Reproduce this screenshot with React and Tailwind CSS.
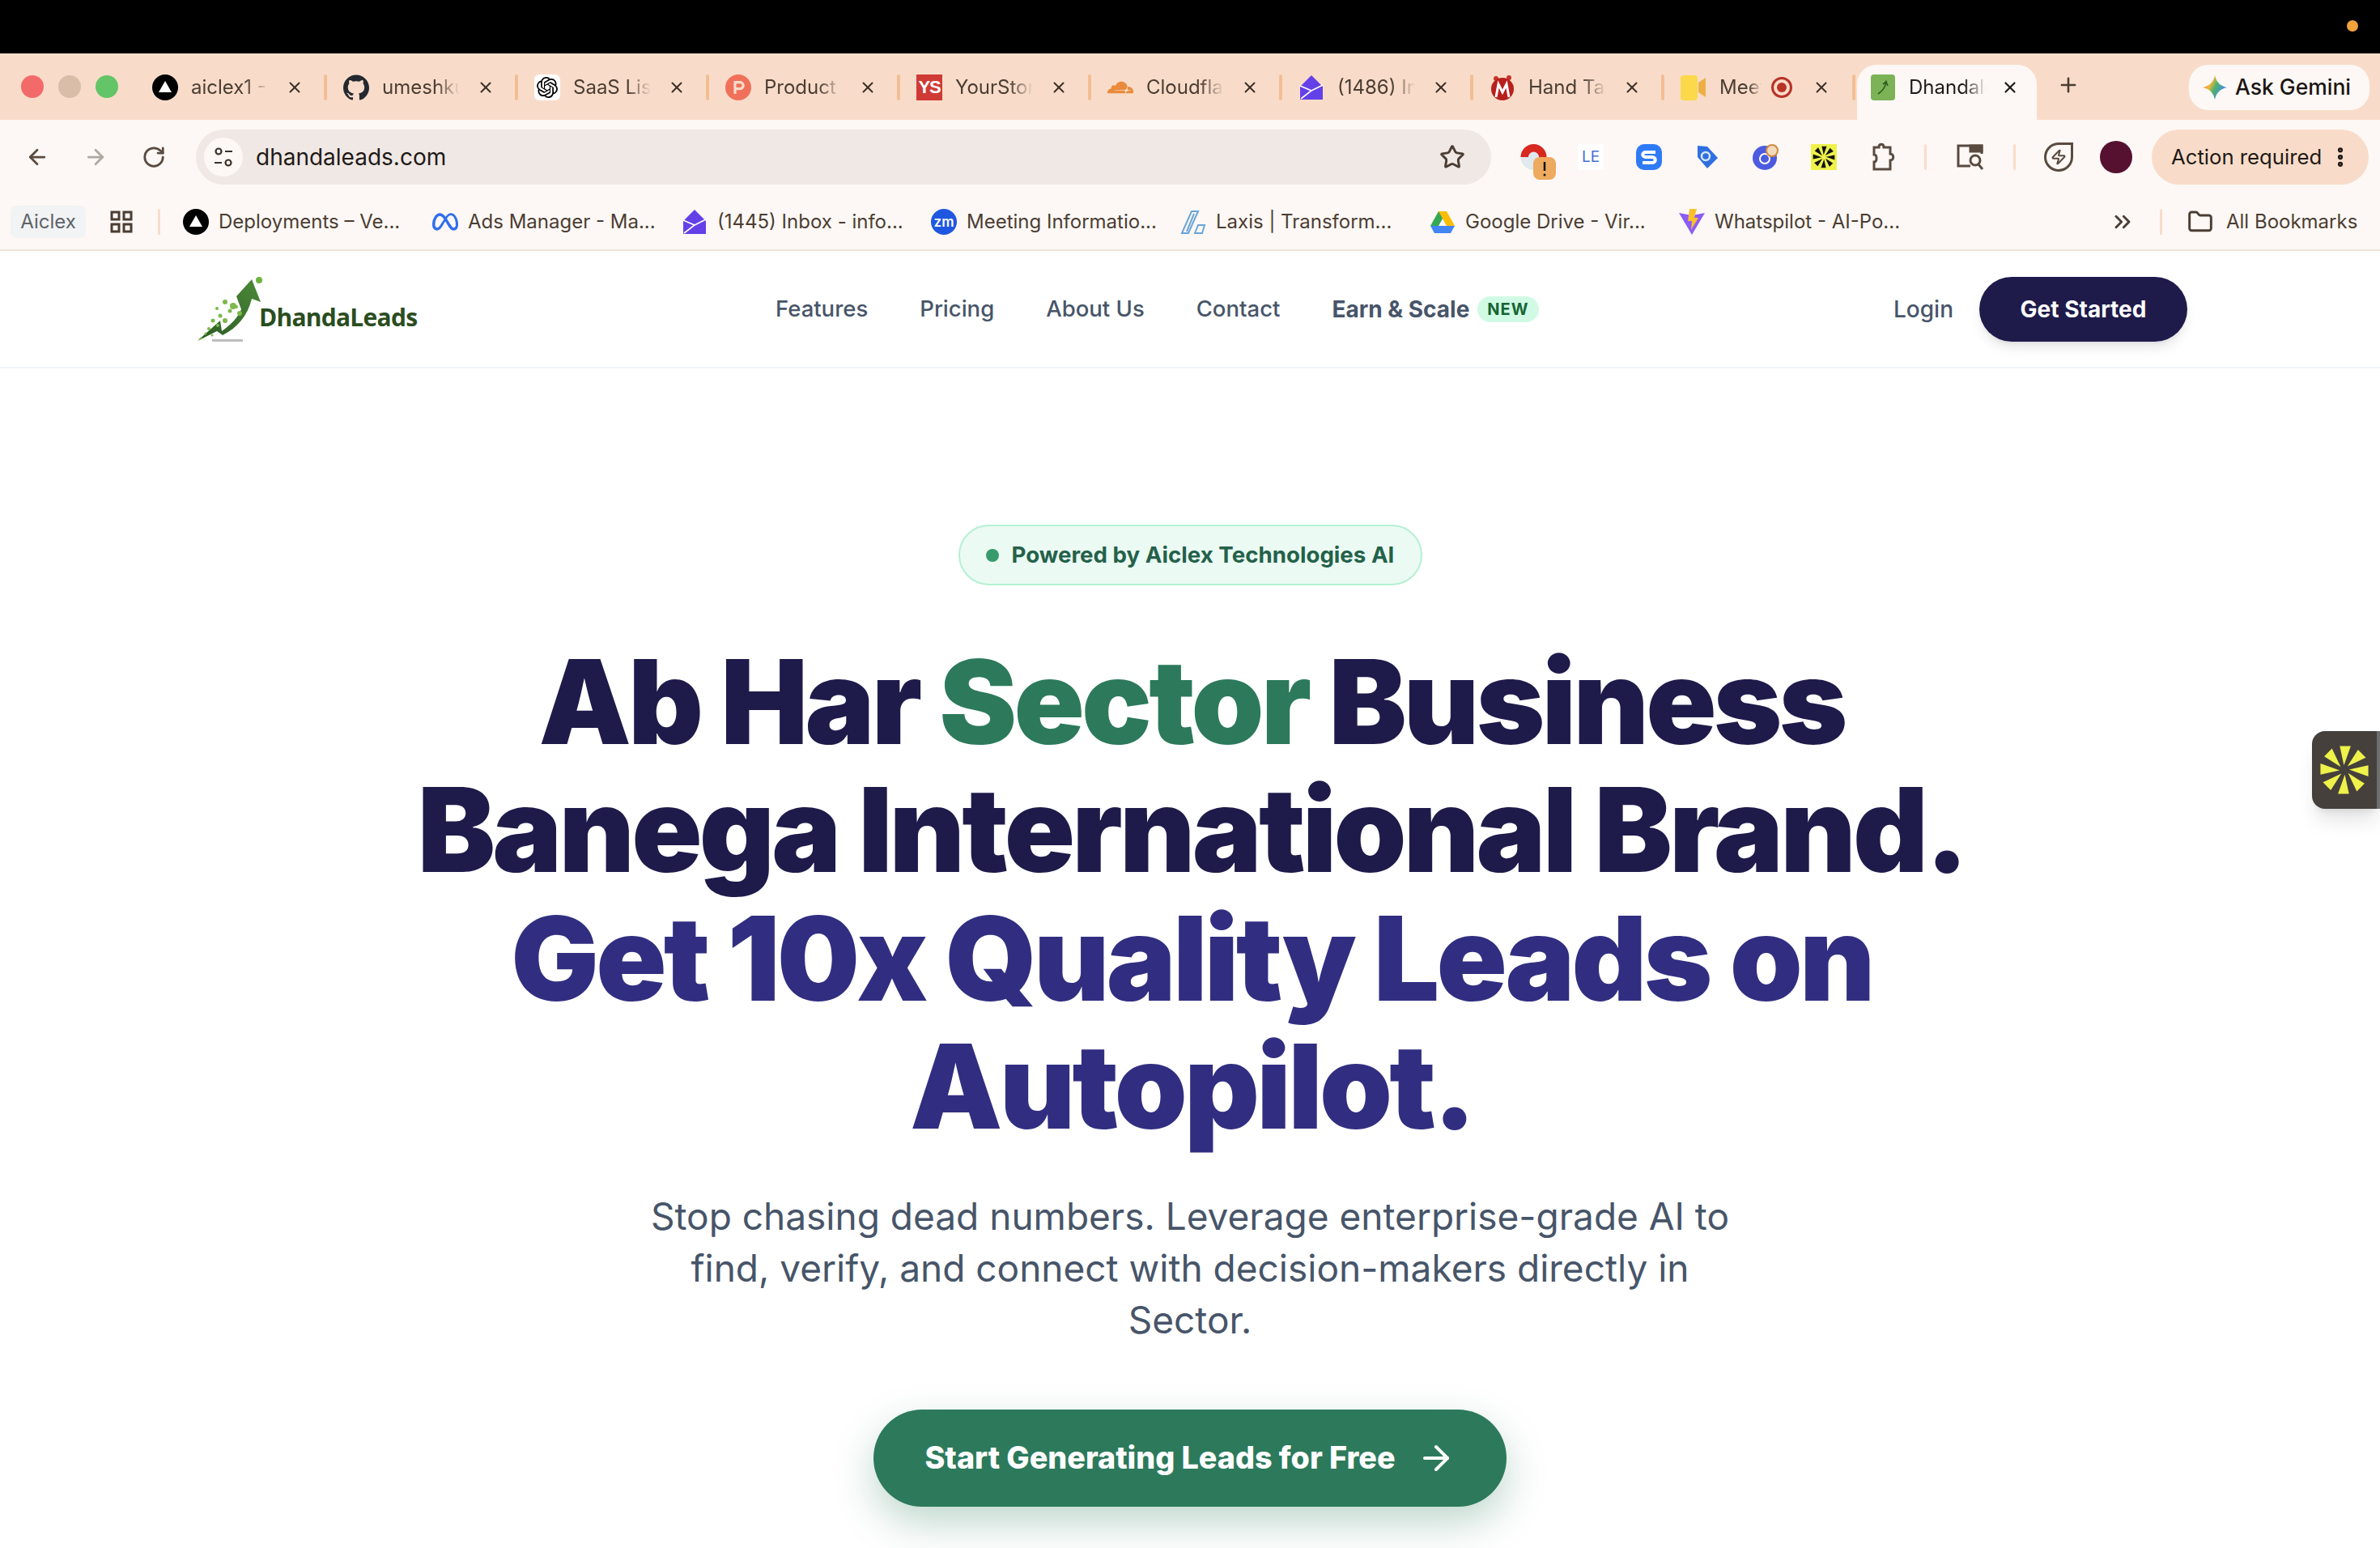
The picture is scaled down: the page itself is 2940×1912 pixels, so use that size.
import React from 'react';
import { ArrowLeft, ArrowRight, RotateCw, Star, X, Plus, EllipsisVertical, Folder, ChevronsRight, Zap } from 'lucide-react';
import { SiGithub, SiOpenai, SiProducthunt, SiCloudflare, SiMeta } from 'react-icons/si';

const VercelIcon = () => (
    <svg viewBox="0 0 32 32" className="w-8 h-8 shrink-0">
        <circle cx="16" cy="16" r="16" fill="#000" />
        <path d="M16 8 L24 22 H8 Z" fill="#fff" />
    </svg>
);

const InboxIcon = () => (
    <svg viewBox="0 0 32 32" className="w-8 h-8 shrink-0">
        <path d="M16 1 L30 15 L30 31 L2 31 L2 15 Z" fill="#6440e8" />
        <path d="M3 30 L16 20 L2 14 M16 20 L30 13" stroke="#fff" strokeWidth="1.6" fill="none" />
    </svg>
);

const Spark = ({ fill = '#eef24a', stroke, className }) => (
    <svg viewBox="-32 -32 64 64" className={className}>
        {[0, 45, 90, 135, 180, 225, 270, 315].map((a) => (
            <path key={a} d="M-1 -6 L-8 -30 L6 -31 Z" fill={fill} stroke={stroke} transform={`rotate(${a + 4})`} />
        ))}
    </svg>
);

const tabs = [
    { label: 'aiclex1 - Overview', icon: <VercelIcon /> },
    { label: 'umeshkumar', icon: <SiGithub className="w-8 h-8 shrink-0 text-[#24292f]" /> },
    { label: 'SaaS List', icon: <span className="w-8 h-8 shrink-0 rounded-md bg-white flex items-center justify-center"><SiOpenai className="w-[26px] h-[26px] text-black" /></span> },
    { label: 'Product', icon: <SiProducthunt className="w-8 h-8 shrink-0 text-[#f0705a]" /> },
    { label: 'YourStory', icon: <span className="w-8 h-8 shrink-0 bg-[#cf3a35] text-white text-[22px] leading-8 font-bold text-center tracking-tighter font-['Liberation_Sans',sans-serif]">YS</span> },
    { label: 'Cloudflare', icon: <SiCloudflare className="w-8 h-8 shrink-0 text-[#e98a3c]" /> },
    { label: '(1486) Inbox', icon: <InboxIcon /> },
    {
        label: 'Hand Talk',
        icon: (
            <svg viewBox="0 0 32 32" className="w-8 h-8 shrink-0">
                <circle cx="8" cy="5" r="3" fill="#c8322a" />
                <circle cx="24" cy="4" r="3" fill="#c8322a" />
                <circle cx="16" cy="18" r="14" fill="#b8201c" />
                <path d="M8 28 L11 12 L16 22 L21 12 L24 28" stroke="#fff" strokeWidth="3" fill="none" />
            </svg>
        ),
    },
    {
        label: 'Meet',
        icon: (
            <svg viewBox="0 0 32 32" className="w-8 h-8 shrink-0">
                <rect x="0" y="1" width="21" height="31" rx="4" fill="#fbd94a" />
                <path d="M22 10 L31 4 V28 L22 22 Z" fill="#efae45" />
            </svg>
        ),
        record: true,
    },
];

const bookmarks = [
    { label: 'Deployments – Ve...', icon: <VercelIcon /> },
    { label: 'Ads Manager - Ma...', icon: <SiMeta className="w-8 h-8 shrink-0 text-[#2f6fed]" /> },
    { label: '(1445) Inbox - info...', icon: <InboxIcon /> },
    { label: 'Meeting Informatio...', icon: <span className="w-8 h-8 shrink-0 rounded-full bg-[#1f57e0] text-white text-[17px] leading-8 text-center font-semibold">zm</span> },
    {
        label: 'Laxis | Transform...',
        icon: (
            <svg viewBox="0 0 32 32" className="w-8 h-8 shrink-0" fill="none" stroke="#6aa5d8" strokeWidth="2">
                <path d="M2 30 L14 3 H22 L10 30 Z" />
                <path d="M8 28 L17 6" />
                <path d="M18 30 L22 20 H30 L27 30 Z" />
            </svg>
        ),
    },
    {
        label: 'Google Drive - Vir...',
        icon: (
            <svg viewBox="0 0 32 32" className="w-8 h-8 shrink-0">
                <path d="M11 3 H21 L11 21 H1 Z" fill="#34a853" />
                <path d="M11 3 H21 L31 21 H21 Z" fill="#fbbc04" />
                <path d="M1 21 H31 L26 30 H6 Z" fill="#4285f4" />
            </svg>
        ),
    },
    {
        label: 'Whatspilot - AI-Po...',
        icon: (
            <svg viewBox="0 0 32 32" className="w-8 h-8 shrink-0">
                <path d="M0 5 L16 8 L32 5 L16 32 Z" fill="#8b5cf6" />
                <path d="M13 0 H22 L19 11 H24 L15 26 L16 15 H11 Z" fill="#fbc02d" />
            </svg>
        ),
    },
];

const extensions = [
    <svg key="poke" viewBox="0 0 48 48" className="w-12 h-12">
        <circle cx="16.5" cy="16" r="16" fill="#dfe9ee" />
        <path d="M0.5 16 A16 16 0 0 1 32.5 16 L23 16 A6.5 6.5 0 0 0 10 16 Z" fill="#d8281f" />
        <rect x="16" y="16" width="28" height="28" rx="8" fill="#eeaa5e" />
        <path d="M30 22 V33" stroke="#111" strokeWidth="2.5" />
        <circle cx="30" cy="38" r="1.5" fill="#111" />
    </svg>,
    <span key="le" className="w-8 h-8 bg-white text-[#4a6fd0] text-[19px] leading-8 text-center">LE</span>,
    <svg key="s" viewBox="0 0 32 32" className="w-8 h-8">
        <rect width="32" height="32" rx="10" fill="#2f7bf6" />
        <path d="M24 10 H12 C7 10 7 16 12 16 H20 C25 16 25 23 20 23 H8" stroke="#fff" strokeWidth="4" fill="none" />
    </svg>,
    <svg key="tag" viewBox="0 0 32 32" className="w-8 h-8">
        <path d="M4 2 L16 3 L29 17 L16 30 L4 16 Z" fill="#2f6fe0" />
        <circle cx="14" cy="15" r="5" fill="none" stroke="#d6e4fb" strokeWidth="2.5" />
    </svg>,
    <svg key="ring" viewBox="0 0 32 32" className="w-8 h-8">
        <circle cx="15" cy="17" r="15" fill="#4c5be0" />
        <circle cx="15" cy="18" r="6" fill="none" stroke="#fff" strokeWidth="2" />
        <circle cx="24" cy="8" r="7" fill="#f3d9bd" stroke="#d08a3c" strokeWidth="2" />
    </svg>,
    <span key="spark" className="w-8 h-8 bg-[#eef24a] flex items-center justify-center"><Spark fill="#111" className="w-7 h-7" /></span>,
];

const Tab = ({ tab }) => (
    <div className="relative w-[236px] h-8 pl-6 flex items-center shrink-0">
        {tab.icon}
        <span className={`ml-4 ${tab.record ? 'w-[52px]' : 'w-[96px]'} overflow-hidden whitespace-nowrap text-[24px] text-[#4b3d33] [mask-image:linear-gradient(to_right,black_70%,transparent)]`}>
            {tab.label}
        </span>
        {tab.record && (
            <span className="ml-3 w-[26px] h-[26px] rounded-full border-[3px] border-[#b83226] flex items-center justify-center shrink-0">
                <span className="w-3 h-3 rounded-full bg-[#b83226]" />
            </span>
        )}
        <X className={`${tab.record ? 'ml-[25px]' : 'ml-[21px]'} w-[22px] h-[22px] text-[#3d302a] shrink-0`} strokeWidth={2.2} />
        <span className="absolute right-[-4px] top-0 w-1 h-8 rounded-sm bg-[#f3bd94]" />
    </div>
);

const ToolbarDivider = ({ className }) => <span className={`block shrink-0 w-[3px] h-8 bg-[#f8dcc9] rounded-sm ${className}`} />;

export default function App() {
    return (
        <div className="relative h-[1912px] w-[2940px] overflow-hidden bg-white font-['Inter',sans-serif]">
            <div className="relative h-[66px] bg-black">
                <span className="absolute left-[2899px] top-[25px] w-[14px] h-[14px] rounded-full bg-[#f2a23c]" />
            </div>

            {/* Tab strip */}
            <div className="relative h-[82px] bg-[#f8dcc9] flex items-start">
                <div className="flex gap-[18px] pl-[26px] pt-[27px]">
                    <span className="w-7 h-7 rounded-full bg-[#f26a6a]" />
                    <span className="w-7 h-7 rounded-full bg-[#d9bda9]" />
                    <span className="w-7 h-7 rounded-full bg-[#63c567]" />
                </div>
                <div className="flex pl-[18px] pt-[26px]">
                    {tabs.map((tab) => (
                        <Tab key={tab.label} tab={tab} />
                    ))}
                </div>
                <div className="absolute bottom-0 left-[2294px] h-[68px] w-[222px] rounded-t-[24px] bg-[#fdf8f5] flex items-center pl-[17px] pb-3">
                    <span className="w-[30px] h-[32px] rounded-sm bg-[#7cb356] flex items-center justify-center shrink-0">
                        <svg viewBox="0 0 20 20" className="w-5 h-5"><path d="M4 18 C10 14 13 10 14 3 L16 8 M14 3 L10 6" stroke="#2c5a20" strokeWidth="1.6" fill="none" /></svg>
                    </span>
                    <span className="ml-[17px] w-[96px] overflow-hidden whitespace-nowrap text-[24px] text-[#1f1a17] [mask-image:linear-gradient(to_right,black_70%,transparent)]">Dhandaleads</span>
                    <X className="ml-[18px] w-[22px] h-[22px] text-[#1f1a17] shrink-0" strokeWidth={2.4} />
                </div>
                <Plus className="absolute left-[2541px] top-[25px] w-7 h-7 text-[#4b3d33]" strokeWidth={2.2} />
                <div className="absolute left-[2704px] top-[14px] h-[56px] w-[223px] rounded-[24px] bg-[#fdf8f5] flex items-center pl-[17px]">
                    <svg viewBox="0 0 32 32" className="w-[30px] h-[30px] shrink-0">
                        <defs>
                            <linearGradient id="gem" x1="0" y1="0" x2="1" y2="0.5">
                                <stop offset="0" stopColor="#e8604c" />
                                <stop offset="0.4" stopColor="#f2b53c" />
                                <stop offset="0.6" stopColor="#4fb26a" />
                                <stop offset="1" stopColor="#4285f4" />
                            </linearGradient>
                        </defs>
                        <path d="M16 0 C18 9 23 14 32 16 C23 18 18 23 16 32 C14 23 9 18 0 16 C9 14 14 9 16 0 Z" fill="url(#gem)" />
                    </svg>
                    <span className="ml-[10px] text-[26.5px] font-medium text-[#1a1512] whitespace-nowrap">Ask Gemini</span>
                </div>
            </div>

            {/* Address toolbar */}
            <div className="h-[92px] bg-[#fdf8f5] flex items-center">
                <div className="flex items-center w-[242px] pl-[31px] gap-[42px]">
                    <ArrowLeft className="w-[30px] h-[30px] text-[#5a4a40]" strokeWidth={2.2} />
                    <ArrowRight className="w-[30px] h-[30px] text-[#b0a8a2]" strokeWidth={2.2} />
                    <RotateCw className="w-[30px] h-[30px] text-[#5a4a40]" strokeWidth={2.2} />
                </div>
                <div className="w-[1600px] h-[68px] rounded-full bg-[#f0e8e5] flex items-center pl-[10px] pr-[32px]">
                    <span className="w-12 h-12 rounded-full bg-[#fdf8f5] flex items-center justify-center">
                        <svg viewBox="0 0 28 28" className="w-7 h-7" fill="none" stroke="#3d302a" strokeWidth="2.2">
                            <circle cx="8" cy="7" r="3.5" />
                            <path d="M16 7 H25 M3 21 H12" />
                            <circle cx="20" cy="21" r="3.5" />
                        </svg>
                    </span>
                    <span className="ml-4 text-[28px] text-[#1f1a17]">dhandaleads.com</span>
                    <Star className="ml-auto w-[32px] h-[32px] text-[#4b3d33]" strokeWidth={2.2} />
                </div>
                <div className="ml-[27px] w-12 h-12 flex items-center justify-center"><span className="ml-[18px] mt-[16px] flex">{extensions[0]}</span></div>
                <div className="ml-[32px] flex items-center gap-[40px]">{extensions.slice(1)}</div>
                <svg viewBox="0 0 32 36" className="ml-[40px] w-8 h-9" fill="none" stroke="#5a4a40" strokeWidth="3">
                    <path d="M6 6 H12 C12 1 18 1 18 6 H26 V14 C31 14 31 22 26 22 V33 H6 V24 C10 24 10 15 6 15 Z" />
                </svg>
                <ToolbarDivider className="ml-[36px]" />
                <svg viewBox="0 0 36 36" className="ml-[36px] w-9 h-9" fill="none" stroke="#5a4a40" strokeWidth="3">
                    <path d="M18 29 H3 V4 H32 V14" />
                    <path d="M18 4 H32 V11 H18 Z" fill="#5a4a40" />
                    <circle cx="24" cy="22" r="6" />
                    <path d="M28 27 L33 33" />
                </svg>
                <ToolbarDivider className="ml-[35px]" />
                <span className="ml-[35px] w-9 h-9 rounded-full rounded-tr-none border-[3px] border-[#5a4a40] flex items-center justify-center">
                    <Zap className="w-5 h-5 text-[#5a4a40]" strokeWidth={2.4} />
                </span>
                <span className="ml-[33px] w-10 h-10 rounded-full bg-[#561030]" />
                <div className="ml-[24px] w-[268px] h-[68px] rounded-full bg-[#f8dcc9] flex items-center pl-[24px]">
                    <span className="text-[25.7px] text-[#1f1a17] whitespace-nowrap">Action required</span>
                    <EllipsisVertical className="ml-[8px] w-[30px] h-[30px] text-[#1f1a17]" strokeWidth={3} />
                </div>
            </div>

            {/* Bookmarks */}
            <div className="relative h-[70px] bg-[#fdf8f5] border-b-2 border-[#f2e3da] flex items-center">
                <span className="ml-[13px] w-[93px] h-[40px] rounded-lg bg-[#f1f3f4] text-[24px] leading-[40px] text-center text-[#5f6368]">Aiclex</span>
                <svg viewBox="0 0 28 28" className="ml-[30px] w-7 h-7" fill="none" stroke="#4b3d33" strokeWidth="3">
                    <rect x="2" y="2" width="9" height="9" />
                    <rect x="17" y="2" width="9" height="9" />
                    <rect x="2" y="17" width="9" height="9" />
                    <rect x="17" y="17" width="9" height="9" />
                </svg>
                <ToolbarDivider className="ml-[31px]" />
                <div className="ml-[28px] flex">
                    {bookmarks.map((b) => (
                        <div key={b.label} className="w-[308px] flex items-center gap-3">
                            {b.icon}
                            <span className="text-[24px] text-[#4b3d33] whitespace-nowrap">{b.label}</span>
                        </div>
                    ))}
                </div>
                <ChevronsRight className="ml-[224px] w-8 h-8 text-[#4b3d33]" strokeWidth={2.2} />
                <ToolbarDivider className="ml-[30px]" />
                <Folder className="ml-[31px] w-8 h-8 text-[#4b3d33]" strokeWidth={2.2} />
                <span className="ml-4 text-[24px] text-[#4b3d33] whitespace-nowrap">All Bookmarks</span>
            </div>

            {/* Site nav */}
            <nav className="h-[145px] border-b-2 border-[#f1f5f9] bg-white">
                <div className="mx-auto w-[2464px] h-full flex items-center">
                    <div className="relative flex w-[720px] items-center">
                        <svg viewBox="0 0 90 84" className="w-[90px] h-[84px] shrink-0">
                            <defs>
                                <linearGradient id="arrowFill" x1="0" y1="1" x2="1" y2="0">
                                    <stop offset="0" stopColor="#2a5a24" />
                                    <stop offset="1" stopColor="#4c8a38" />
                                </linearGradient>
                            </defs>
                            <path d="M6 81 L34 56 L36 69 C48 60 56 52 60 42 L54 26 L73 5 L84 33 L73 29 C68 50 55 65 37 74 L30 69 Z" fill="url(#arrowFill)" />
                            <circle cx="82" cy="6" r="4" fill="#6db33f" />
                            {[[40, 33, 3], [46, 44, 2.5], [50, 38, 4], [54, 39, 2], [58, 47, 3], [30, 41, 2], [34, 50, 2.5], [40, 56, 3], [25, 56, 2.5], [31, 62, 2], [20, 66, 2], [16, 72, 1.5], [24, 74, 1.5], [10, 78, 1.5]].map(([cx, cy, r]) => (
                                <circle key={`${cx}-${cy}`} cx={cx} cy={cy} r={r} fill="#7db84a" />
                            ))}
                            <rect x="24" y="79" width="38" height="3" fill="#bdbdbd" />
                        </svg>
                        <span className="ml-[-8px] mt-[20px] text-[30px] font-bold text-[#2a4d1f] whitespace-nowrap tracking-tight font-['Open_Sans',sans-serif]">DhandaLeads</span>
                    </div>
                    <div className="flex items-center gap-[64px] text-[27.5px] font-medium text-[#475569]">
                        <span>Features</span>
                        <span>Pricing</span>
                        <span>About Us</span>
                        <span>Contact</span>
                        <span className="flex items-center gap-[10px] text-[28px] font-bold text-[#475569]">
                            Earn &amp; Scale
                            <span className="px-3 h-8 leading-8 rounded-full bg-[#d1fae5] text-[20px] tracking-wider text-[#166534]">NEW</span>
                        </span>
                    </div>
                    <div className="ml-auto flex items-center gap-[32px]">
                        <span className="text-[28px] font-medium text-[#475569]">Login</span>
                        <span className="w-[257px] h-[80px] rounded-full bg-[#1e1b4b] text-white text-[28px] font-bold flex items-center justify-center shadow-lg">Get Started</span>
                    </div>
                </div>
            </nav>

            {/* Hero */}
            <main className="flex flex-col items-center pt-[193px]">
                <div className="h-[75px] w-[573px] rounded-full border-2 border-[#b5f0d3] bg-[#ebfbf3] flex items-center pl-[32px] gap-4">
                    <span className="w-4 h-4 rounded-full bg-[#389b6c]" />
                    <span className="text-[27.7px] font-bold text-[#24614a] whitespace-nowrap">Powered by Aiclex Technologies AI</span>
                </div>
                <h1 className="mt-[65px] pl-[4px] text-center text-[144px] leading-[158.4px] font-black tracking-[-0.026em] text-[#1e1b4b] whitespace-nowrap">
                    <span className="block">Ab Har <span className="text-[#2c7a5b]">Sector</span> Business</span>
                    <span className="block">Banega International Brand.</span>
                    <span className="block text-[#312e81]">Get 10x Quality Leads on</span>
                    <span className="block text-[#312e81]">Autopilot.</span>
                </h1>
                <p className="mt-[48px] w-[1344px] text-center text-[46px] leading-[64px] text-[#475569]">
                    Stop chasing dead numbers. Leverage enterprise-grade AI to find, verify, and connect with decision-makers directly in Sector.
                </p>
                <button className="mt-[79px] w-[782px] h-[120px] rounded-full bg-[#2c7a5b] text-white text-[37.7px] font-extrabold flex items-center justify-center gap-[26px] shadow-[0_20px_50px_rgba(44,122,91,0.3)]">
                    Start Generating Leads for Free
                    <ArrowRight className="w-12 h-12" strokeWidth={2} />
                </button>
            </main>

            {/* Floating extension handle */}
            <div className="absolute left-[2856px] top-[903px] w-[84px] h-[96px] rounded-l-2xl bg-[#45403c] border-r-4 border-[#6e6e6e] flex items-center pl-[9px] shadow-xl">
                <Spark className="w-[62px] h-[62px]" />
            </div>
        </div>
    );
}
